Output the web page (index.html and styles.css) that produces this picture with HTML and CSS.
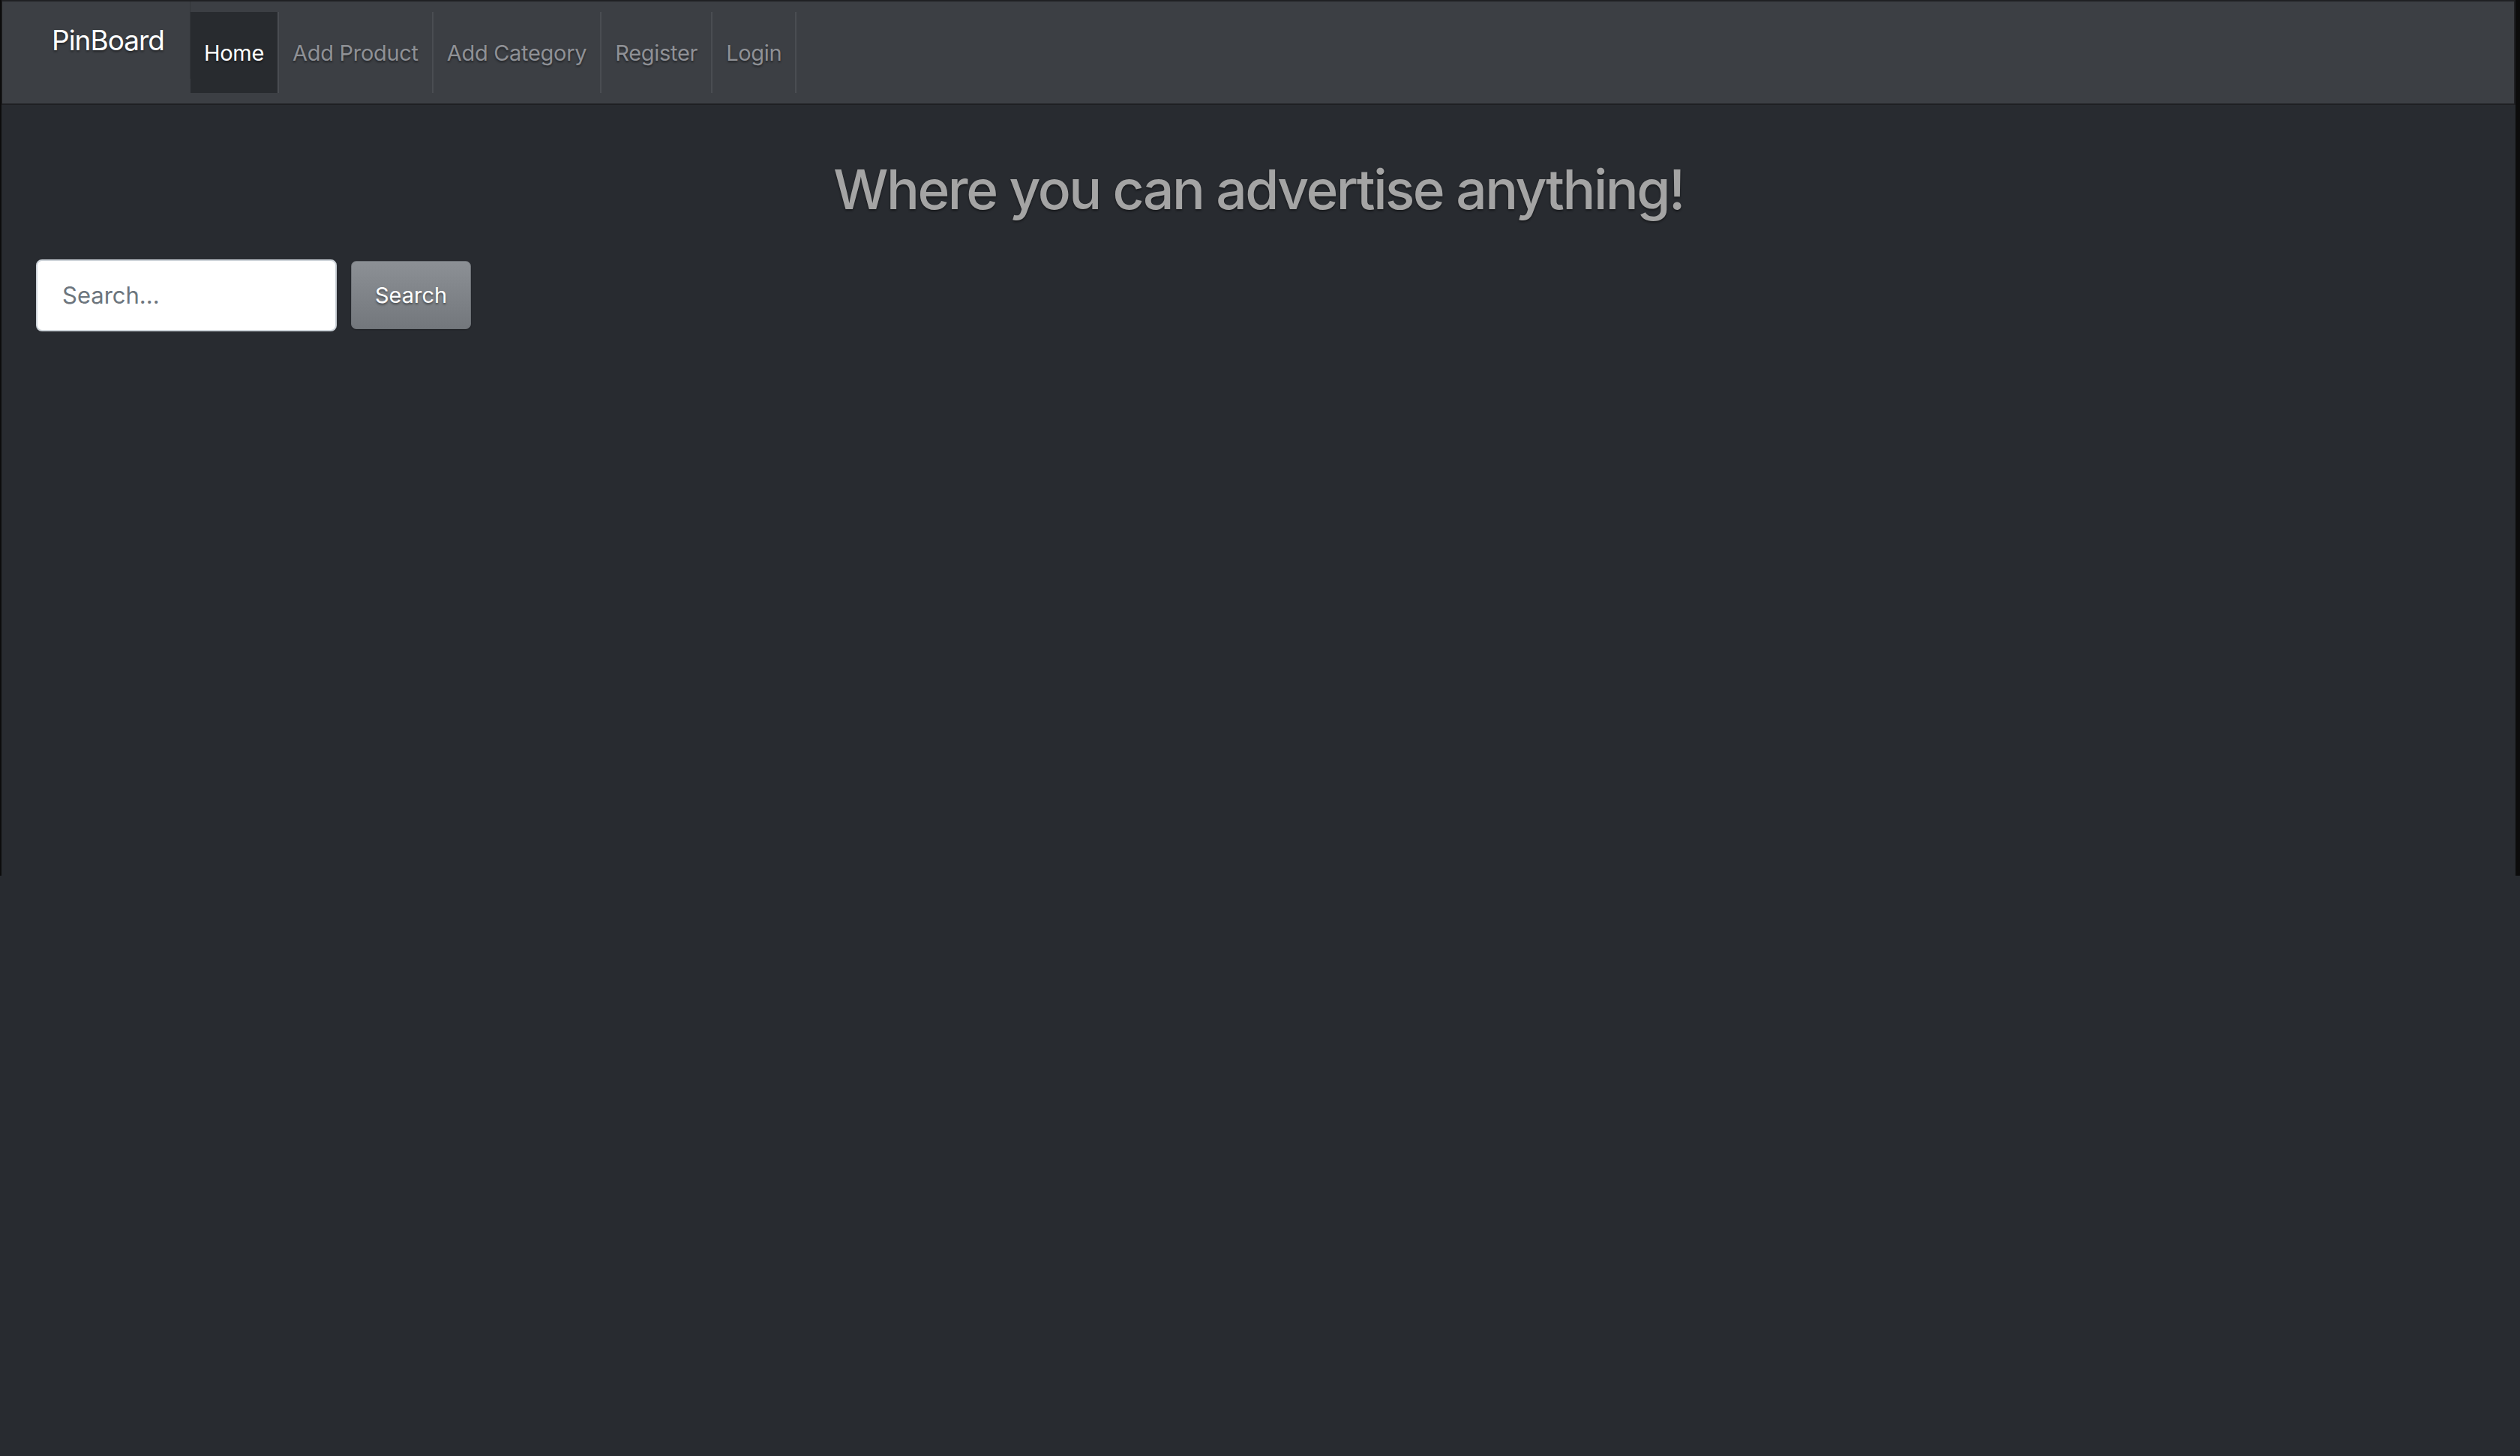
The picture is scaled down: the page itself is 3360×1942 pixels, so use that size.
FILE: index.html
```html
<!DOCTYPE html>
<html lang="en">
<head>
<meta charset="utf-8">
<title>PinBoard</title>
<link rel="stylesheet" href="styles.css">
</head>
<body>
<div class="page">
  <nav class="navbar">
    <a class="brand" href="#">PinBoard</a>
    <ul class="nav">
      <li class="nav-item active"><a href="#">Home</a></li>
      <li class="nav-item"><a href="#">Add Product</a></li>
      <li class="nav-item"><a href="#">Add Category</a></li>
      <li class="nav-item"><a href="#">Register</a></li>
      <li class="nav-item"><a href="#">Login</a></li>
    </ul>
  </nav>
  <main class="main">
    <h1 class="title">Where you can advertise anything!</h1>
    <form class="search">
      <input class="search-input" type="text" placeholder="Search...">
      <button class="search-btn" type="button">Search</button>
    </form>
  </main>
</div>
</body>
</html>
```
FILE: styles.css
```css
html {
  background: #282b30;
}
body {
  margin: 0;
  font-family: Inter, "Liberation Sans", sans-serif;
}
.page {
  box-sizing: border-box;
  height: 1168px;
  border-left: 2px solid #0c0c0c;
  border-right: 6px solid #0c0c0c;
  background: #282b30;
}
.navbar {
  display: flex;
  align-items: flex-start;
  background: #3c3f44;
  border-top: 2px solid #1f2023;
  border-bottom: 2px solid #1f2023;
  border-right: 2px solid #1f2023;
  border-left: 1px solid #1f2023;
  height: 136px;
}
.brand {
  box-sizing: border-box;
  display: flex;
  align-items: center;
  width: 251px;
  height: 103px;
  padding-left: 66px;
  border-right: 1px solid #33363a;
  color: #fff;
  text-decoration: none;
  font-size: 37px;
  letter-spacing: -1px;
  text-shadow: 0 2px 3px rgba(0,0,0,0.45);
}
.nav {
  display: flex;
  list-style: none;
  margin: 0;
  padding: 14px 0;
  height: 108px;
}
.nav-item {
  display: flex;
  align-items: center;
  padding: 0 18px;
  border-right: 2px solid #4a4d52;
}
.nav-item a {
  color: #8f9196;
  text-decoration: none;
  font-size: 29px;
  letter-spacing: -0.3px;
  text-shadow: 0 2px 3px rgba(0,0,0,0.45);
}
.nav-item.active {
  background: #282b2f;
}
.nav-item.active a {
  color: #fff;
}
.main {
  padding: 69px 0 0 46px;
}
.title {
  margin: 0 0 49px -46px;
  text-align: center;
  font-size: 73px;
  line-height: 1.2;
  font-weight: 500;
  letter-spacing: -2.5px;
  color: #a4a4a4;
  text-shadow: 0 2px 3px rgba(0,0,0,0.45);
}
.search {
  display: flex;
  align-items: center;
}
.search-input {
  box-sizing: border-box;
  width: 401px;
  height: 96px;
  border: 2px solid #ced4da;
  border-radius: 8px;
  padding: 0 0 0 33px;
  font-family: Inter, "Liberation Sans", sans-serif;
  font-size: 31px;
  color: #495057;
  background: #fff;
  outline: none;
}
.search-input::placeholder {
  color: #6c757d;
}
.search-btn {
  box-sizing: border-box;
  margin-left: 19px;
  width: 160px;
  height: 91px;
  border: 1px solid #6e7277;
  border-radius: 7px;
  background: linear-gradient(#8c9095, #73777c);
  color: #fff;
  font-family: Inter, "Liberation Sans", sans-serif;
  font-size: 29px;
  text-shadow: 0 2px 3px rgba(0,0,0,0.45);
  box-shadow: 0 1px 2px rgba(0,0,0,0.3);
}
```
